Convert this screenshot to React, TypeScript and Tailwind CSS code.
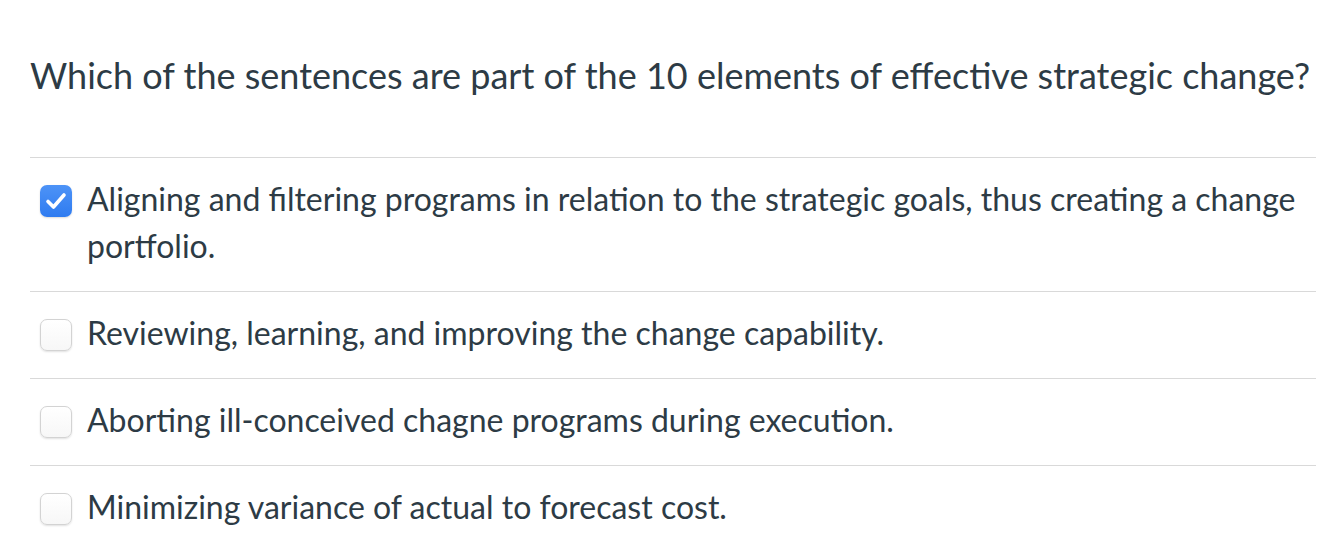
const OPTIONS = [
  { text: "Aligning and filtering programs in relation to the strategic goals, thus creating a change portfolio.", checked: true },
  { text: "Reviewing, learning, and improving the change capability.", checked: false },
  { text: "Aborting ill-conceived chagne programs during execution.", checked: false },
  { text: "Minimizing variance of actual to forecast cost.", checked: false },
];

export default function App() {
  return (
    <div className="w-[1340px] h-[552px] bg-white text-[#2d3b45] overflow-hidden" style={{ fontFamily: "Lato, 'Open Sans', sans-serif" }}>
      <div className="pl-[30px] pr-[24px] pt-[52px]">
        <h1 className="text-[36px] leading-[46px] font-normal">
          Which of the sentences are part of the 10 elements of effective strategic change?
        </h1>
        <div className="mt-[59px] border-t border-[#d9d9d9]">
          {OPTIONS.map((opt, i) => (
            <div key={i} className="flex items-start border-b border-[#d9d9d9] last:border-b-0 pt-[17px] pb-[22px]">
              <div className="pl-[10px] mt-[10px] shrink-0">
                {opt.checked ? (
                  <div className="w-[32px] h-[32px] rounded-[7px] bg-gradient-to-b from-[#4d93f7] to-[#2e7bf0] flex items-center justify-center shadow-[0_1px_2px_rgba(0,0,0,0.15)]">
                    <svg width="32" height="32" viewBox="0 0 32 32" fill="none">
                      <polyline points="8,16.5 13.5,22 24,10" stroke="white" strokeWidth="3.6" strokeLinecap="round" strokeLinejoin="round" />
                    </svg>
                  </div>
                ) : (
                  <div className="w-[32px] h-[32px] rounded-[7px] bg-gradient-to-b from-white to-[#f7f7f7] border border-[#d3d3d3] shadow-[0_1px_2px_rgba(0,0,0,0.12)]" />
                )}
              </div>
              <p className="ml-[15px] text-[32px] leading-[47px]">{opt.text}</p>
            </div>
          ))}
        </div>
      </div>
    </div>
  );
}
